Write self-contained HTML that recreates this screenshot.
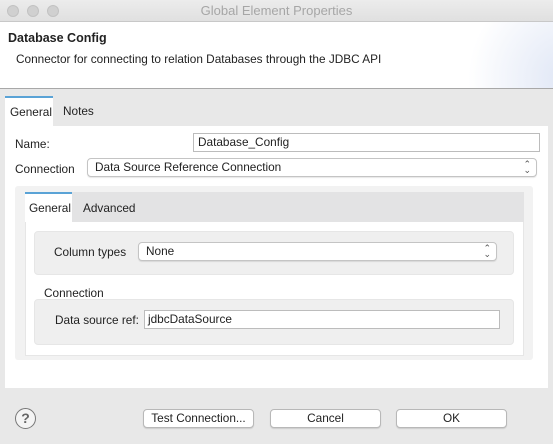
<!DOCTYPE html>
<html><head><style>
*{box-sizing:border-box;margin:0;padding:0}
body{width:553px;height:444px;overflow:hidden;background:#e8e8e8;font-family:"Liberation Sans",sans-serif;font-size:11.8px;color:#222;position:relative}
.a{position:absolute}
.title{left:0;top:0;width:553px;height:22px;background:linear-gradient(#ececec,#e0e0e0);border-bottom:1px solid #c8c8c8;text-align:center;line-height:22px;color:#a6a6a6;font-size:13px}
.dot{width:12px;height:12px;border-radius:50%;background:#d0d0d0;border:1px solid #c2c2c2;top:5px}
.head{left:0;top:22px;width:553px;height:67px;background:#fff;border-bottom:1px solid #a8a8a8;overflow:hidden}
.inp{background:#fff;border:1px solid #bcbcbc;height:19px;line-height:17px;padding-left:4px}
.sel{background:#fff;border:1px solid #c4c4c4;border-radius:4px;height:19px;line-height:17px;padding-left:7px;box-shadow:0 1px 1px rgba(0,0,0,.1)}
.arr{position:absolute;right:5px;top:2px;font-size:9px;line-height:6px;color:#555;text-align:center}
.btn{background:#fff;border:1px solid #b8b8b8;border-radius:4px;height:19px;line-height:17px;text-align:center;box-shadow:0 1px 1px rgba(0,0,0,.12)}
.tab{background:#fff;border-top:2px solid #5aa3d6}
</style></head><body>
<div class="a title">Global Element Properties</div>
<div class="a dot" style="left:7px"></div><div class="a dot" style="left:27px"></div><div class="a dot" style="left:47px"></div>
<div class="a head">
<div class="a" style="right:-60px;top:-40px;width:150px;height:160px;border-radius:50%;background:radial-gradient(circle at 70% 60%,#dfe6f5,#fff 70%)"></div>
<div class="a" style="left:8px;top:9px;font-weight:bold;font-size:12.5px">Database Config</div>
<div class="a" style="left:16px;top:30px">Connector for connecting to relation Databases through the JDBC API</div>
</div>
<div class="a tab" style="left:5px;top:96px;width:48px;height:31px;padding:7px 0 0 5px">General</div>
<div class="a" style="left:63px;top:104px">Notes</div>
<div class="a" style="left:5px;top:126px;width:543px;height:262px;background:#fff"></div>
<div class="a" style="left:15px;top:137px">Name:</div>
<div class="a inp" style="left:193px;top:133px;width:347px">Database_Config</div>
<div class="a" style="left:15px;top:162px">Connection</div>
<div class="a sel" style="left:87px;top:158px;width:450px">Data Source Reference Connection<div class="arr">⌃<br>⌄</div></div>
<div class="a" style="left:15px;top:186px;width:518px;height:174px;background:#f2f2f2;border-radius:3px"></div>
<div class="a" style="left:25px;top:192px;width:499px;height:164px;background:#fff;border:1px solid #e6e6e6"></div>
<div class="a" style="left:25px;top:192px;width:499px;height:30px;background:#e3e3e4"></div>
<div class="a tab" style="left:25px;top:192px;width:47px;height:30px;padding:7px 0 0 4px">General</div>
<div class="a" style="left:83px;top:201px">Advanced</div>
<div class="a" style="left:34px;top:231px;width:480px;height:44px;background:#efefef;border-radius:4px;border:1px solid #e6e6e6"></div>
<div class="a" style="left:54px;top:245px">Column types</div>
<div class="a sel" style="left:138px;top:242px;width:359px">None<div class="arr">⌃<br>⌄</div></div>
<div class="a" style="left:44px;top:286px">Connection</div>
<div class="a" style="left:34px;top:299px;width:480px;height:46px;background:#efefef;border-radius:4px;border:1px solid #e6e6e6"></div>
<div class="a" style="left:55px;top:313px">Data source ref:</div>
<div class="a inp" style="left:144px;top:310px;width:356px;padding-left:3px">jdbcDataSource</div>
<div class="a" style="left:15px;top:408px;width:21px;height:21px;border-radius:50%;border:1.5px solid #777;background:#f4f4f4;text-align:center;line-height:18px;font-weight:bold;font-size:14px;color:#666">?</div>
<div class="a btn" style="left:143px;top:409px;width:111px">Test Connection...</div>
<div class="a btn" style="left:270px;top:409px;width:111px">Cancel</div>
<div class="a btn" style="left:396px;top:409px;width:111px">OK</div>
</body></html>
